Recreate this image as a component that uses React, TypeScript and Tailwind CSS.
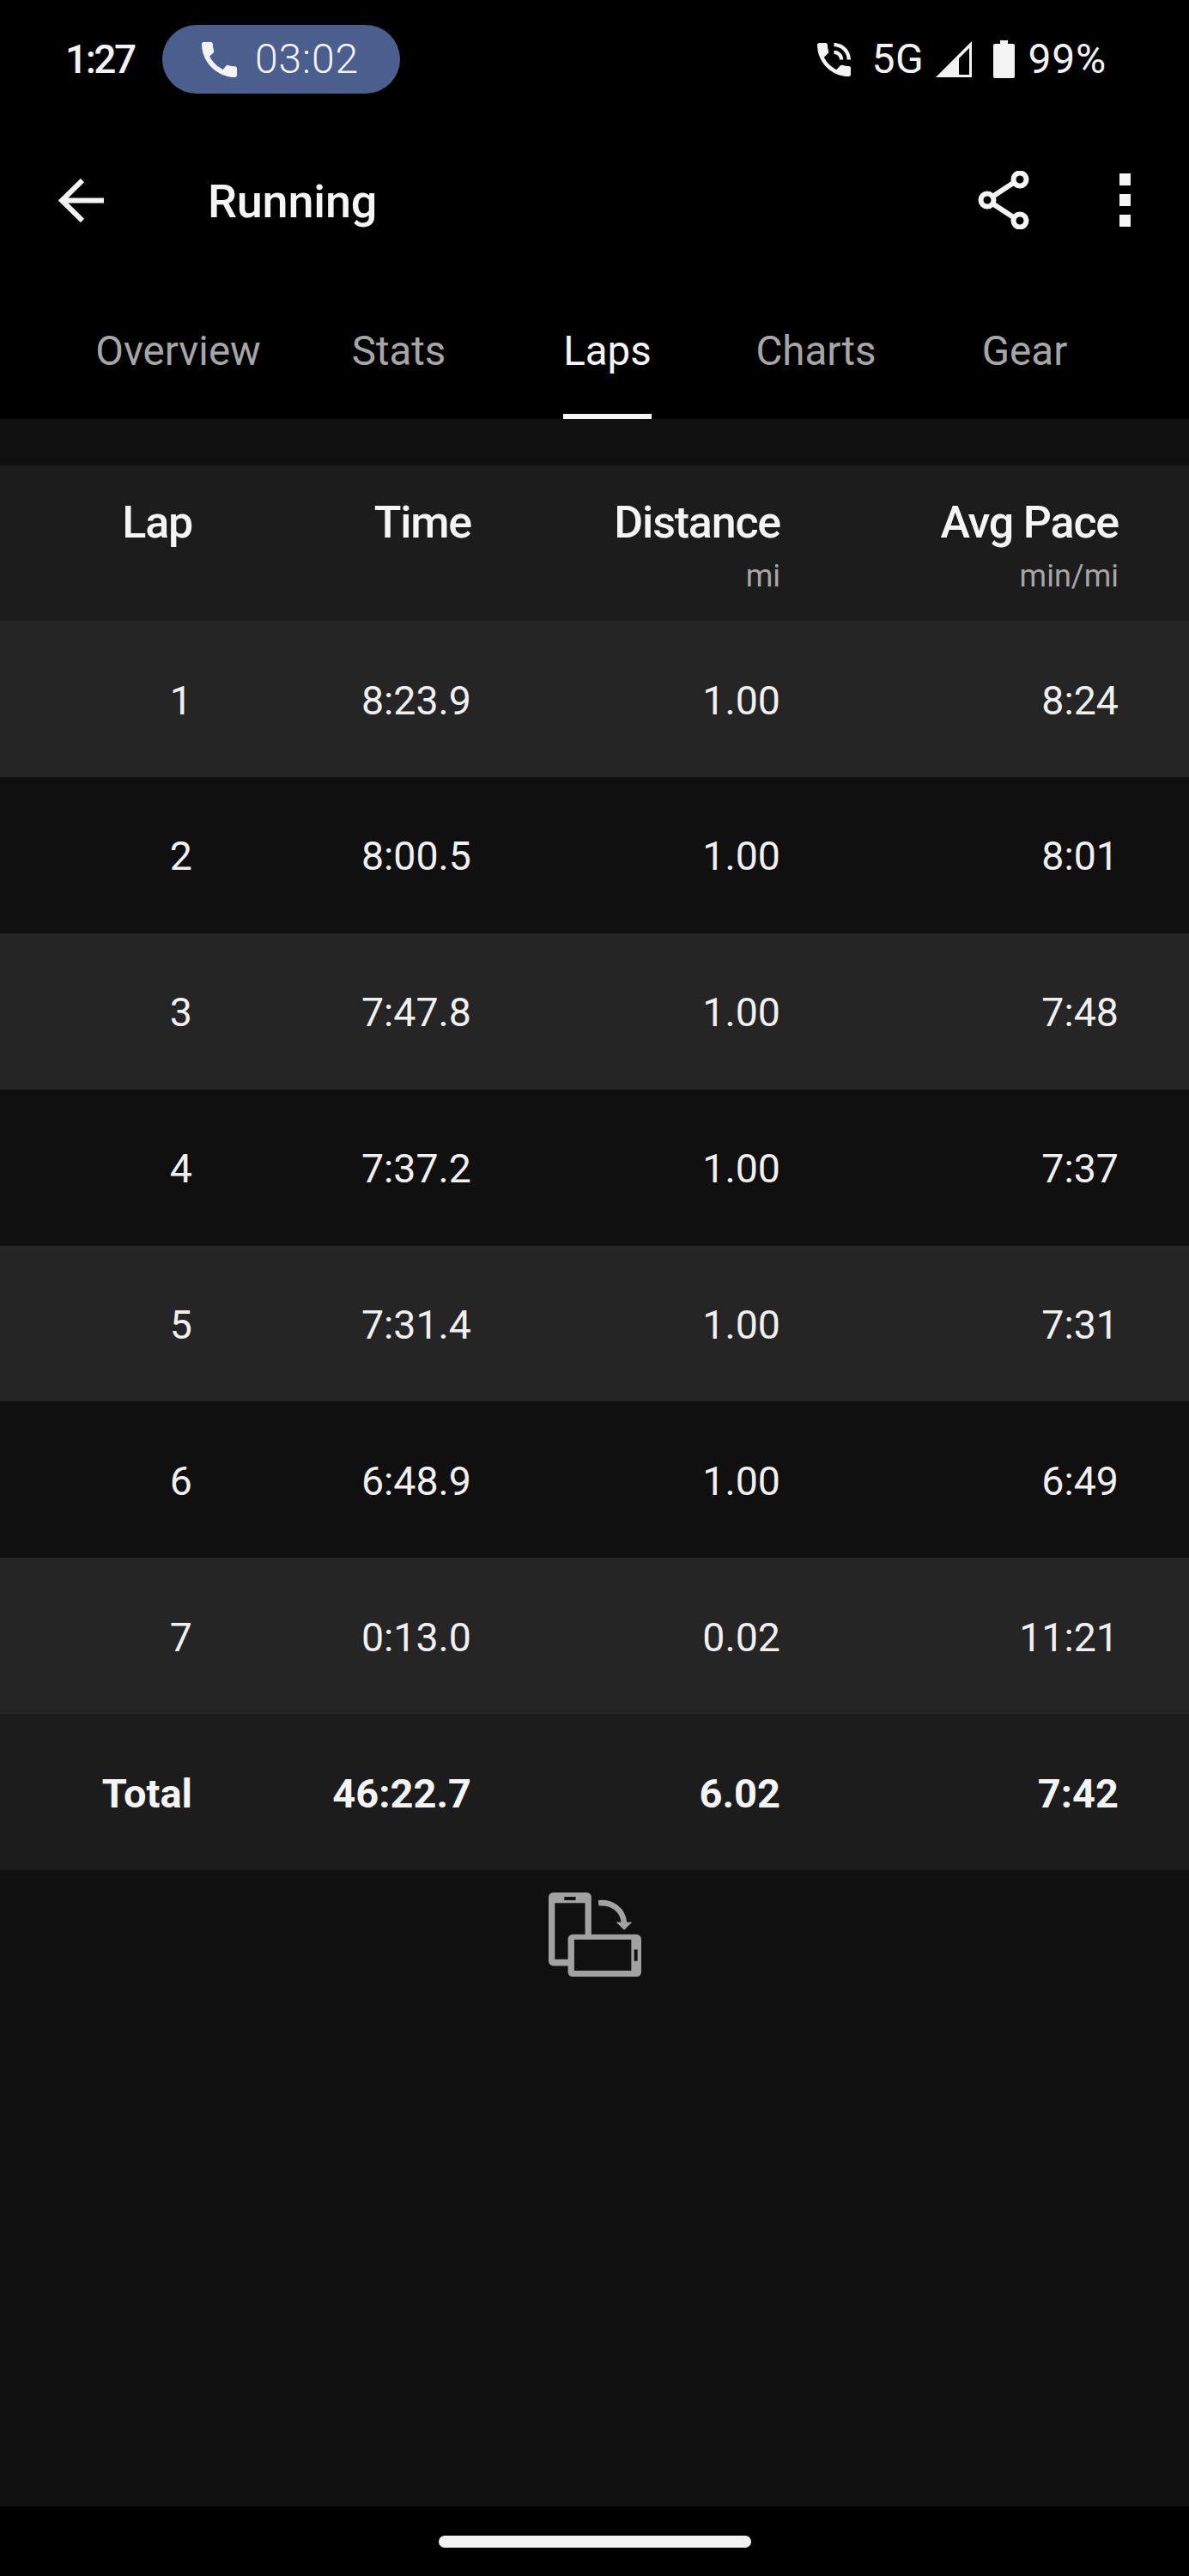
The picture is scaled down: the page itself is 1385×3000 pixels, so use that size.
import React from 'react';

const laps = [
  { lap: '1', time: '8:23.9', dist: '1.00', pace: '8:24' },
  { lap: '2', time: '8:00.5', dist: '1.00', pace: '8:01' },
  { lap: '3', time: '7:47.8', dist: '1.00', pace: '7:48' },
  { lap: '4', time: '7:37.2', dist: '1.00', pace: '7:37' },
  { lap: '5', time: '7:31.4', dist: '1.00', pace: '7:31' },
  { lap: '6', time: '6:48.9', dist: '1.00', pace: '6:49' },
  { lap: '7', time: '0:13.0', dist: '0.02', pace: '11:21' },
];

const tabs = ['Overview', 'Stats', 'Laps', 'Charts', 'Gear'];

const gridCols = 'grid grid-cols-[224px_325px_360px_394px] text-right';

const StatusBar = () => (
  <div className="h-[138px] flex items-center justify-between pl-[76px] pr-[96px] text-[#f3f3f3]">
    <div className="flex items-center">
      <span className="text-[46px] font-medium tracking-[-2.5px] w-[113px]">1:27</span>
      <div className="w-[277px] h-[80px] rounded-full bg-[#4a5f8d] flex items-center pl-[46px]">
        <svg viewBox="3 3 18 18" className="w-[41px] h-[41px]" fill="currentColor">
          <path d="M20.01 15.38c-1.23 0-2.42-.2-3.53-.56-.35-.12-.74-.03-1.01.24l-1.57 1.97c-2.83-1.35-5.48-3.9-6.89-6.83l1.95-1.66c.27-.28.35-.67.24-1.02-.37-1.11-.56-2.3-.56-3.53 0-.54-.45-.99-.99-.99H4.19C3.65 3 3 3.24 3 3.99 3 13.28 10.73 21 20.01 21c.71 0 .99-.63.99-1.18v-3.45c0-.54-.45-.99-.99-.99z" />
        </svg>
        <span className="ml-[21px] text-[48px] font-light tracking-[0.9px]">03:02</span>
      </div>
    </div>
    <div className="flex items-center">
      <svg viewBox="3 3 18 18" className="w-[39px] h-[39px]" fill="currentColor">
        <path d="M20 15.5c-1.25 0-2.45-.2-3.57-.57-.35-.11-.74-.03-1.02.24l-2.2 2.2c-2.83-1.44-5.15-3.75-6.59-6.59l2.2-2.21c.28-.26.36-.65.25-1C8.7 6.45 8.5 5.25 8.5 4c0-.55-.45-1-1-1H4c-.55 0-1 .45-1 1 0 9.39 7.61 17 17 17 .55 0 1-.45 1-1v-3.5c0-.55-.45-1-1-1zM19 12h2c0-4.97-4.03-9-9-9v2c3.87 0 7 3.13 7 7zm-4 0h2c0-2.76-2.24-5-5-5v2c1.66 0 3 1.34 3 3z" />
      </svg>
      <span className="ml-[24px] w-[62px] text-[48px] tracking-[0.5px]">5G</span>
      <svg viewBox="0 0 42 42" className="ml-[13px] w-[42px] h-[42px]" fill="currentColor">
        <path fillRule="evenodd" d="M42 0V42H0ZM39 8V39H27V20Z" />
      </svg>
      <svg viewBox="0 0 25 44" className="ml-[25px] w-[25px] h-[44px]" fill="currentColor">
        <path d="M8 0h9v4h6a2 2 0 0 1 2 2v36a2 2 0 0 1-2 2H2a2 2 0 0 1-2-2V6a2 2 0 0 1 2-2h6z" />
      </svg>
      <span className="ml-[15px] text-[48px] tracking-[0.8px]">99%</span>
    </div>
  </div>
);

const AppBar = () => (
  <div className="h-[190px] flex items-center text-[#f5f5f5]">
    <svg viewBox="0 0 53 51" className="ml-[68px] w-[53px] h-[51px]" fill="none" stroke="currentColor" strokeWidth="6">
      <path d="M53 25.5H5M28 2 4 25.5 28 49" />
    </svg>
    <span className="ml-[121px] pt-[2px] text-[54px] font-medium tracking-[-0.2px]">Running</span>
    <svg viewBox="0 0 60 68" className="ml-auto w-[60px] h-[68px]" fill="none" stroke="currentColor" strokeWidth="6">
      <path d="M11 34 49 9M11 34 49 59" />
      <circle cx="11" cy="34" r="7.5" fill="#000" />
      <circle cx="49" cy="10" r="7.5" fill="#000" />
      <circle cx="49" cy="58" r="7.5" fill="#000" />
    </svg>
    <div className="ml-[105px] mr-[68px] flex flex-col gap-[10px]">
      <div className="w-[13px] h-[14px] bg-current" />
      <div className="w-[13px] h-[14px] bg-current" />
      <div className="w-[13px] h-[14px] bg-current" />
    </div>
  </div>
);

const RotateIcon = () => (
  <svg viewBox="235 133 325 295" className="w-[108px] h-[98px]" fill="#a2a2a2">
    <path fillRule="evenodd" d="M251 133h118a16 16 0 0 1 16 16v225a16 16 0 0 1-16 16H251a16 16 0 0 1-16-16V149a16 16 0 0 1 16-16zM257 170v197h106V170zM290 148v12h40v-12z" />
    <path d="M319 280h225a16 16 0 0 1 16 16v116a16 16 0 0 1-16 16H319a16 16 0 0 1-16-16V296a16 16 0 0 1 16-16z" />
    <rect x="325" y="298" width="200" height="109" fill="#101010" />
    <rect x="535" y="333" width="12" height="40" fill="#101010" />
    <path d="M410 170C455 165 495 190 500 240" fill="none" stroke="#a2a2a2" strokeWidth="20" />
    <path d="M472 237h56l-28 28z" />
  </svg>
);

export default function App() {
  return (
    <div className="w-[1385px] h-[3000px] bg-black flex flex-col font-['Roboto',sans-serif]">
      <StatusBar />
      <AppBar />

      {/* tabs */}
      <div className="h-[160px] pl-[72px] flex">
        {tabs.map((t, i) => (
          <div key={t} className={`h-full flex justify-center ${i === 0 ? 'w-[271px]' : 'w-[243px]'}`}>
            <div className={`h-full flex items-center border-b-[6px] pt-[10px] text-[47.5px] ${t === 'Laps' ? 'text-[#f5f5f5] border-[#f5f5f5]' : 'text-[#a6a6a6] border-transparent'}`}>
              {t}
            </div>
          </div>
        ))}
      </div>

      <div className="flex-1 bg-[#101010] pt-[54px] flex flex-col">
        {/* table head */}
        <div className={`${gridCols} h-[181px] bg-[#1c1c1c] pt-[32px] text-[#f5f5f5] text-[52px] font-medium leading-[70px] tracking-[-1.2px]`}>
          <div>Lap</div>
          <div>Time</div>
          <div className="flex flex-col">
            <span>Distance</span>
            <span className="text-[36px] font-normal text-[#a6a6a6] leading-[54px] tracking-normal">mi</span>
          </div>
          <div className="flex flex-col">
            <span>Avg Pace</span>
            <span className="text-[36px] font-normal text-[#a6a6a6] leading-[54px] tracking-normal">min/mi</span>
          </div>
        </div>

        {laps.map((r, i) => (
          <div key={r.lap} className={`${gridCols} h-[181.875px] items-center pt-[5px] text-[46.5px] text-[#f0f0f0] ${i % 2 === 0 ? 'bg-[#252525]' : 'bg-[#101010]'}`}>
            <div>{r.lap}</div>
            <div>{r.time}</div>
            <div>{r.dist}</div>
            <div>{r.pace}</div>
          </div>
        ))}

        <div className={`${gridCols} h-[181.875px] items-center pt-[5px] bg-[#1c1c1c] text-[47px] font-bold text-[#f5f5f5]`}>
          <div>Total</div>
          <div>46:22.7</div>
          <div>6.02</div>
          <div>7:42</div>
        </div>

        <div className="flex justify-center pt-[26px]">
          <RotateIcon />
        </div>
      </div>

      {/* nav bar */}
      <div className="h-[81px] flex justify-center pt-[34px]">
        <div className="w-[364px] h-[14px] rounded-full bg-[#f3f3f3]" />
      </div>
    </div>
  );
}
